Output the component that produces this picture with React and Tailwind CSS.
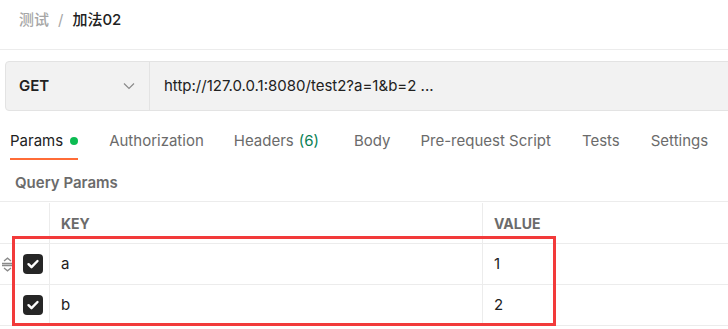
import React from "react";

const tabs = [
  { label: "Params", dot: true, active: true, gap: "mr-[31px]" },
  { label: "Authorization", gap: "mr-[30px]" },
  { label: "Headers", count: "(6)", gap: "mr-[35px]" },
  { label: "Body", gap: "mr-[30px]" },
  { label: "Pre-request Script", gap: "mr-[31px]" },
  { label: "Tests", gap: "mr-[31px]" },
  { label: "Settings", gap: "mr-0" },
];

const rows = [
  { key: "a", value: "1", handle: true },
  { key: "b", value: "2" },
];

function CheckBox() {
  return (
    <div className="flex h-[20px] w-[20px] items-center justify-center rounded-[4px] bg-[#262626]">
      <svg width="14" height="14" viewBox="0 0 14 14" fill="none">
        <path d="M2.5 7.2l3 3 6-6.2" stroke="#fff" strokeWidth="2.4" strokeLinecap="round" strokeLinejoin="round" />
      </svg>
    </div>
  );
}

function DragHandle() {
  return (
    <svg width="11" height="15" viewBox="0 0 11 15" fill="none" className="text-[#8a8a8a]">
      <path d="M2 4L5.5 1.2 9 4M2 11l3.5 2.8L9 11" stroke="currentColor" strokeWidth="1.3" />
      <path d="M0 6.5h11M0 8.5h11" stroke="currentColor" strokeWidth="1.3" />
    </svg>
  );
}

export default function App() {
  return (
    <div className="relative h-[329px] w-[728px] overflow-hidden bg-white font-['Inter','Noto_Sans_CJK_SC',sans-serif] text-[#212121]">
      {/* breadcrumb */}
      <div className="flex h-[50px] items-start border-b border-[#ececec] px-[19px] pt-[10px] text-[15px] leading-[20px]">
        <span className="font-medium text-[#a6a6a6]">测试</span>
        <span className="mx-[9px] text-[#a6a6a6]">/</span>
        <span className="font-medium text-[#212121]">加法02</span>
      </div>

      {/* request bar */}
      <div className="ml-[5px] mt-[11px] flex h-[50px] w-[740px] rounded-[4px] border border-[#e3e3e3] bg-[#f2f2f2]">
        <div className="flex w-[144px] items-center justify-between border-r border-[#e3e3e3] pl-[13px] pr-[14px]">
          <span className="text-[15px] font-semibold text-[#212121]">GET</span>
          <svg width="12" height="8" viewBox="0 0 12 8" fill="none">
            <path d="M1 1.5l5 5 5-5" stroke="#8a8a8a" strokeWidth="1.2" />
          </svg>
        </div>
        <div className="flex items-center pl-[14px] text-[15px] text-[#212121]">
          http://127.0.0.1:8080/test2?a=1&amp;b=2 ...
        </div>
      </div>

      {/* tabs */}
      <div className="mt-[18px] flex h-[31px] items-start whitespace-nowrap pl-[10px] text-[15px] leading-[24px]">
        {tabs.map((t) => (
          <div key={t.label} className={`${t.gap} flex shrink-0 flex-col`}>
            <div className={`flex items-center ${t.active ? "text-[#212121]" : "text-[#6b6b6b]"}`}>
              <span>{t.label}</span>
              {t.count && <span className="ml-[5px] text-[#0a7f55]">{t.count}</span>}
              {t.dot && <span className="ml-[7px] h-[8px] w-[8px] rounded-full bg-[#0cbb52]" />}
            </div>
            <div className={`mt-[5px] h-[2px] ${t.active ? "bg-[#ff6c37]" : "bg-transparent"}`} />
          </div>
        ))}
      </div>

      {/* query params label */}
      <div className="mt-[13px] pl-[15px] text-[15px] font-semibold leading-[20px] text-[#6b6b6b]">Query Params</div>

      {/* table */}
      <div className="mt-[8px] border-t border-[#ececec]">
        <div className="grid h-[42px] grid-cols-[50px_433px_1fr] border-b border-[#ececec] pt-[1px] text-[14px] font-bold text-[#6b6b6b]">
          <div className="border-r border-[#ececec]" />
          <div className="flex items-center border-r border-[#ececec] pl-[11px]">KEY</div>
          <div className="flex items-center pl-[11px]">VALUE</div>
        </div>
        {rows.map((r) => (
          <div key={r.key} className="grid h-[41px] grid-cols-[50px_433px_1fr] border-b border-[#ececec] text-[15px] text-[#212121]">
            <div className="relative flex items-center border-r border-[#ececec] pl-[23px]">
              {r.handle && (
                <span className="absolute left-[2px] top-[13px]">
                  <DragHandle />
                </span>
              )}
              <CheckBox />
            </div>
            <div className="flex items-center border-r border-[#ececec] pl-[11px]">{r.key}</div>
            <div className="flex items-center pl-[11px]">{r.value}</div>
          </div>
        ))}
      </div>

      {/* annotation box */}
      <div className="absolute left-[12px] top-[236px] h-[90px] w-[544px] border-[3px] border-[#f23a3a]" />
    </div>
  );
}
